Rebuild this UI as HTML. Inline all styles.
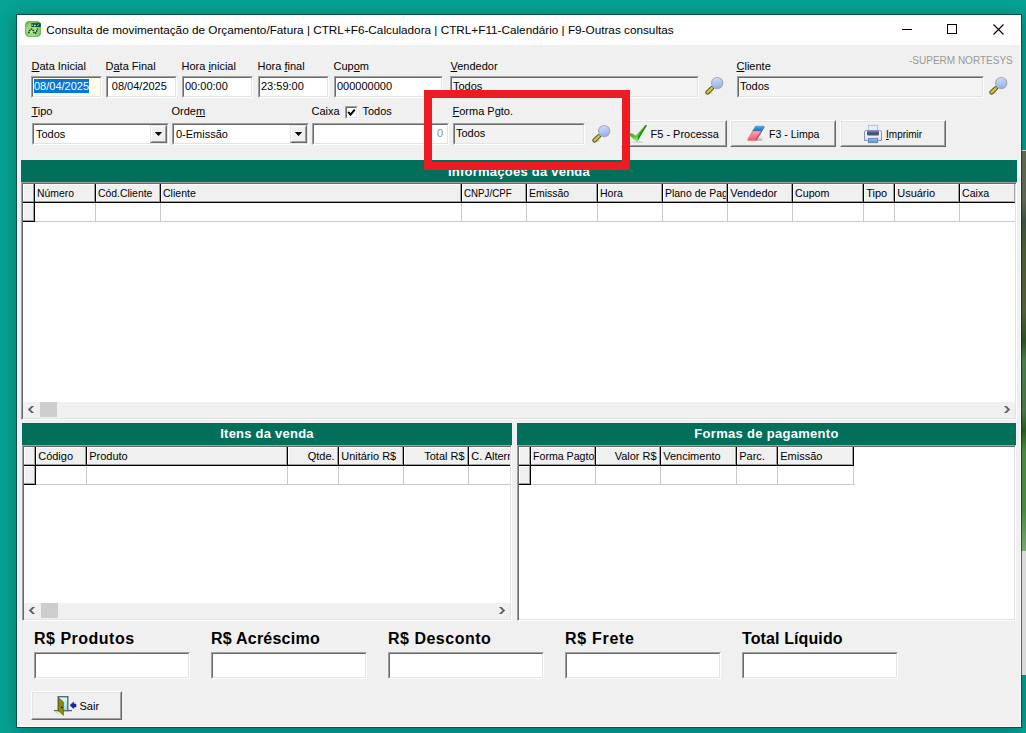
<!DOCTYPE html><html><head><meta charset="utf-8"><style>
html,body{margin:0;padding:0;width:1026px;height:733px;overflow:hidden;}
body{position:relative;background:#06a294;font-family:"Liberation Sans", sans-serif;font-size:11px;color:#000;}
u{text-decoration:underline;text-underline-offset:1px;text-decoration-thickness:1px;}
div{box-sizing:content-box;}
</style></head><body>
<div style="position:absolute;left:16px;top:14px;width:1004px;height:712px;border:1px solid transparent;box-shadow:0 3px 16px rgba(0,30,20,0.32)"></div>
<div style="position:absolute;left:1021px;top:150px;width:5px;height:1px;background:#c8d0c0"></div>
<div style="position:absolute;left:1021px;top:151px;width:5px;height:400px;background:linear-gradient(#5c6650 0px,#5a6450 50px,#3d5040 70px,#4a5a30 100px,#505e38 160px,#2c5020 190px,#4a7a48 210px,#467446 260px,#2a5a20 280px,#4a8a40 300px,#4a8a40 360px,#70a068 390px,#78a870 400px)"></div>
<div style="position:absolute;left:1021px;top:551px;width:5px;height:124px;background:#dadada"></div>
<div style="position:absolute;left:16px;top:14px;width:1004px;height:712px;border:1px solid rgba(16,24,22,0.62);background:#f0f0f0;background-clip:padding-box"></div>
<div style="position:absolute;left:17px;top:15px;width:1004px;height:30px;background:#fff"></div>
<div style="position:absolute;left:17px;top:45px;width:1px;height:682px;background:#fff"></div>
<div style="position:absolute;left:1020px;top:45px;width:1px;height:682px;background:#fff"></div>
<div style="position:absolute;left:17px;top:726px;width:1004px;height:1px;background:#fff"></div>
<svg style="position:absolute;left:25px;top:21px" width="16" height="16" viewBox="0 0 16 16"><defs><radialGradient id="ig" cx="0.45" cy="0.6" r="0.65"><stop offset="0" stop-color="#c0eca0"/><stop offset="0.7" stop-color="#90d070"/><stop offset="1" stop-color="#50a838"/></radialGradient></defs><rect x="0.4" y="0.4" width="15.2" height="15.2" rx="3.8" fill="url(#ig)" stroke="#58b040" stroke-width="0.8"/><rect x="6.3" y="2.2" width="9.4" height="3.8" fill="#0a4a30"/><path d="M7.2 3.2 L7.2 5 M9.3 4 L10.3 4 L10.3 5 L9.3 5 Z M12.5 5 L13.5 3.3" stroke="#d8f0c8" stroke-width="0.9" fill="none"/><path d="M3.6 12.4 C4.2 10 5.5 7.6 7 8 C8.4 8.4 8.6 12.6 10 12.4 C11.4 12.2 12 9 12.8 7.6" fill="none" stroke="#0a4028" stroke-width="1.5" stroke-dasharray="1.6 0.7"/></svg>
<div style="position:absolute;left:46.3px;top:21.6px;line-height:15px;white-space:nowrap;font-size:11.75px;color:#000">Consulta de movimentação de Orçamento/Fatura | CTRL+F6-Calculadora | CTRL+F11-Calendário | F9-Outras consultas</div>
<div style="position:absolute;left:902px;top:29px;width:10px;height:1px;background:#000"></div>
<div style="position:absolute;left:947px;top:24px;width:8px;height:8px;border:1px solid #000"></div>
<svg style="position:absolute;left:993px;top:24px" width="11" height="11" viewBox="0 0 11 11"><path d="M0.5 0.5 L10.5 10.5 M10.5 0.5 L0.5 10.5" stroke="#000" stroke-width="1.1"/></svg>
<div style="position:absolute;left:909px;top:54px;line-height:13px;white-space:nowrap;color:#999;font-size:10px">-SUPERM NORTESYS</div>
<div style="position:absolute;left:31.5px;top:60px;line-height:13px;white-space:nowrap;"><u>D</u>ata Inicial</div>
<div style="position:absolute;left:105.5px;top:60px;line-height:13px;white-space:nowrap;">D<u>a</u>ta Final</div>
<div style="position:absolute;left:181.5px;top:60px;line-height:13px;white-space:nowrap;">Hora <u>i</u>nicial</div>
<div style="position:absolute;left:257.5px;top:60px;line-height:13px;white-space:nowrap;">Hora <u>f</u>inal</div>
<div style="position:absolute;left:333.5px;top:60px;line-height:13px;white-space:nowrap;">Cup<u>o</u>m</div>
<div style="position:absolute;left:450.5px;top:60px;line-height:13px;white-space:nowrap;"><u>V</u>endedor</div>
<div style="position:absolute;left:736.5px;top:60px;line-height:13px;white-space:nowrap;"><u>C</u>liente</div>
<div style="position:absolute;left:31px;top:76px;width:69px;height:20px;border:1px solid;border-color:#a0a0a0 #fff #fff #a0a0a0;"><div style="position:absolute;left:0;top:0;width:67px;height:18px;border:1px solid;border-color:#696969 #e3e3e3 #e3e3e3 #696969;background:#fffde8;overflow:hidden"><div style="position:absolute;left:1px;top:1px;width:55px;height:14px;background:#0078d7"></div><div style="position:absolute;left:1px;top:2px;line-height:13px;color:#fff">08/04/2025</div></div></div>
<div style="position:absolute;left:106px;top:76px;width:69px;height:20px;border:1px solid;border-color:#a0a0a0 #fff #fff #a0a0a0;"><div style="position:absolute;left:0;top:0;width:67px;height:18px;border:1px solid;border-color:#696969 #e3e3e3 #e3e3e3 #696969;background:#fff;overflow:hidden"><div style="position:absolute;left:3.8px;top:2px;line-height:13px">08/04/2025</div></div></div>
<div style="position:absolute;left:182px;top:76px;width:69px;height:20px;border:1px solid;border-color:#a0a0a0 #fff #fff #a0a0a0;"><div style="position:absolute;left:0;top:0;width:67px;height:18px;border:1px solid;border-color:#696969 #e3e3e3 #e3e3e3 #696969;background:#fff;overflow:hidden"><div style="position:absolute;left:1px;top:2px;line-height:13px">00:00:00</div></div></div>
<div style="position:absolute;left:258px;top:76px;width:69px;height:20px;border:1px solid;border-color:#a0a0a0 #fff #fff #a0a0a0;"><div style="position:absolute;left:0;top:0;width:67px;height:18px;border:1px solid;border-color:#696969 #e3e3e3 #e3e3e3 #696969;background:#fff;overflow:hidden"><div style="position:absolute;left:1px;top:2px;line-height:13px">23:59:00</div></div></div>
<div style="position:absolute;left:334px;top:76px;width:107px;height:20px;border:1px solid;border-color:#a0a0a0 #fff #fff #a0a0a0;"><div style="position:absolute;left:0;top:0;width:105px;height:18px;border:1px solid;border-color:#696969 #e3e3e3 #e3e3e3 #696969;background:#fff;overflow:hidden"><div style="position:absolute;left:1px;top:2px;line-height:13px">000000000</div></div></div>
<div style="position:absolute;left:450px;top:76px;width:247px;height:20px;border:1px solid;border-color:#a0a0a0 #fff #fff #a0a0a0;"><div style="position:absolute;left:0;top:0;width:245px;height:18px;border:1px solid;border-color:#696969 #e3e3e3 #e3e3e3 #696969;background:#f4f4f4;overflow:hidden"><div style="position:absolute;left:1px;top:2px;line-height:13px">Todos</div></div></div>
<div style="position:absolute;left:737px;top:76px;width:245px;height:20px;border:1px solid;border-color:#a0a0a0 #fff #fff #a0a0a0;"><div style="position:absolute;left:0;top:0;width:243px;height:18px;border:1px solid;border-color:#696969 #e3e3e3 #e3e3e3 #696969;background:#f4f4f4;overflow:hidden"><div style="position:absolute;left:1px;top:2px;line-height:13px">Todos</div></div></div>
<svg style="position:absolute;left:705px;top:75px" width="20" height="20" viewBox="0 0 20 20"><defs><linearGradient id="lg" x1="0" y1="0" x2="0.2" y2="1"><stop offset="0" stop-color="#d4e2fa"/><stop offset="1" stop-color="#94b0f0"/></linearGradient><linearGradient id="hg" x1="0" y1="0" x2="1" y2="1"><stop offset="0" stop-color="#e8e070"/><stop offset="1" stop-color="#b8a830"/></linearGradient></defs><ellipse cx="5.5" cy="18" rx="2.5" ry="0.7" fill="#c0c0c0" opacity="0.6"/><path d="M2.6 17.4 L6.8 13.3" stroke="#5a5410" stroke-width="4.4" stroke-linecap="round"/><path d="M2.6 17.4 L6.8 13.3" stroke="url(#hg)" stroke-width="2.4" stroke-linecap="round"/><circle cx="12.2" cy="8.1" r="5.6" fill="url(#lg)" stroke="#a8aab4" stroke-width="1.2"/></svg>
<svg style="position:absolute;left:989px;top:75px" width="20" height="20" viewBox="0 0 20 20"><defs><linearGradient id="lg" x1="0" y1="0" x2="0.2" y2="1"><stop offset="0" stop-color="#d4e2fa"/><stop offset="1" stop-color="#94b0f0"/></linearGradient><linearGradient id="hg" x1="0" y1="0" x2="1" y2="1"><stop offset="0" stop-color="#e8e070"/><stop offset="1" stop-color="#b8a830"/></linearGradient></defs><ellipse cx="5.5" cy="18" rx="2.5" ry="0.7" fill="#c0c0c0" opacity="0.6"/><path d="M2.6 17.4 L6.8 13.3" stroke="#5a5410" stroke-width="4.4" stroke-linecap="round"/><path d="M2.6 17.4 L6.8 13.3" stroke="url(#hg)" stroke-width="2.4" stroke-linecap="round"/><circle cx="12.2" cy="8.1" r="5.6" fill="url(#lg)" stroke="#a8aab4" stroke-width="1.2"/></svg>
<div style="position:absolute;left:31.5px;top:105px;line-height:13px;white-space:nowrap;"><u>T</u>ipo</div>
<div style="position:absolute;left:171.5px;top:105px;line-height:13px;white-space:nowrap;">Orde<u>m</u></div>
<div style="position:absolute;left:311.5px;top:105px;line-height:13px;white-space:nowrap;">Caixa</div>
<div style="position:absolute;left:362.5px;top:105px;line-height:13px;white-space:nowrap;">Todos</div>
<div style="position:absolute;left:452.5px;top:105px;line-height:13px;white-space:nowrap;"><u>F</u>orma Pgto.</div>
<div style="position:absolute;left:345px;top:106px;width:11px;height:11px;border:1px solid;border-color:#a0a0a0 #fff #fff #a0a0a0;"><div style="position:absolute;left:0;top:0;width:9px;height:9px;border:1px solid;border-color:#696969 #e3e3e3 #e3e3e3 #696969;background:#fff;overflow:hidden"></div></div>
<svg style="position:absolute;left:345px;top:106px" width="13" height="13" viewBox="0 0 13 13"><path d="M3.2 5.8 L5.5 8.6 L9.8 3.6" fill="none" stroke="#000" stroke-width="2"/></svg>
<div style="position:absolute;left:32px;top:123px;width:135px;height:20px;border:1px solid;border-color:#a0a0a0 #fff #fff #a0a0a0;"><div style="position:absolute;left:0;top:0;width:133px;height:18px;border:1px solid;border-color:#696969 #e3e3e3 #e3e3e3 #696969;background:#fff;overflow:hidden"><div style="position:absolute;left:2px;top:3px;line-height:13px">Todos</div></div></div>
<div style="position:absolute;left:150px;top:125px;width:15px;height:16px;border:1px solid;border-color:#e3e3e3 #696969 #696969 #e3e3e3;"><div style="position:absolute;left:0;top:0;width:13px;height:14px;border:1px solid;border-color:#fff #a0a0a0 #a0a0a0 #fff;background:#f0f0f0;overflow:hidden"><svg style="position:absolute;left:0;top:0" width="13" height="14"><polygon points="2.8,5 10.2,5 6.5,9" fill="#000"/></svg></div></div>
<div style="position:absolute;left:172px;top:123px;width:135px;height:20px;border:1px solid;border-color:#a0a0a0 #fff #fff #a0a0a0;"><div style="position:absolute;left:0;top:0;width:133px;height:18px;border:1px solid;border-color:#696969 #e3e3e3 #e3e3e3 #696969;background:#fff;overflow:hidden"><div style="position:absolute;left:2px;top:3px;line-height:13px">0-Emissão</div></div></div>
<div style="position:absolute;left:290px;top:125px;width:15px;height:16px;border:1px solid;border-color:#e3e3e3 #696969 #696969 #e3e3e3;"><div style="position:absolute;left:0;top:0;width:13px;height:14px;border:1px solid;border-color:#fff #a0a0a0 #a0a0a0 #fff;background:#f0f0f0;overflow:hidden"><svg style="position:absolute;left:0;top:0" width="13" height="14"><polygon points="2.8,5 10.2,5 6.5,9" fill="#000"/></svg></div></div>
<div style="position:absolute;left:312px;top:123px;width:135px;height:20px;border:1px solid;border-color:#a0a0a0 #fff #fff #a0a0a0;"><div style="position:absolute;left:0;top:0;width:133px;height:18px;border:1px solid;border-color:#696969 #e3e3e3 #e3e3e3 #696969;background:#fff;overflow:hidden"><div style="position:absolute;right:4px;top:2px;line-height:13px;color:#8a8a9a">0</div></div></div>
<div style="position:absolute;left:453px;top:123px;width:130px;height:20px;border:1px solid;border-color:#a0a0a0 #fff #fff #a0a0a0;"><div style="position:absolute;left:0;top:0;width:128px;height:18px;border:1px solid;border-color:#696969 #e3e3e3 #e3e3e3 #696969;background:#f2f2f2;overflow:hidden"><div style="position:absolute;left:1px;top:2px;line-height:13px">Todos</div></div></div>
<svg style="position:absolute;left:592px;top:123px" width="20" height="20" viewBox="0 0 20 20"><defs><linearGradient id="lg" x1="0" y1="0" x2="0.2" y2="1"><stop offset="0" stop-color="#d4e2fa"/><stop offset="1" stop-color="#94b0f0"/></linearGradient><linearGradient id="hg" x1="0" y1="0" x2="1" y2="1"><stop offset="0" stop-color="#e8e070"/><stop offset="1" stop-color="#b8a830"/></linearGradient></defs><ellipse cx="5.5" cy="18" rx="2.5" ry="0.7" fill="#c0c0c0" opacity="0.6"/><path d="M2.6 17.4 L6.8 13.3" stroke="#5a5410" stroke-width="4.4" stroke-linecap="round"/><path d="M2.6 17.4 L6.8 13.3" stroke="url(#hg)" stroke-width="2.4" stroke-linecap="round"/><circle cx="12.2" cy="8.1" r="5.6" fill="url(#lg)" stroke="#a8aab4" stroke-width="1.2"/></svg>
<div style="position:absolute;left:621px;top:120px;width:104px;height:25px;border:1px solid;border-color:#fff #696969 #696969 #fff;"><div style="position:absolute;left:0;top:0;width:102px;height:23px;border:1px solid;border-color:#e3e3e3 #a0a0a0 #a0a0a0 #e3e3e3;background:#f0f0f0;overflow:hidden"><div style="position:absolute;left:27.5px;top:6px;line-height:13px">F5 - Processa</div></div></div>
<div style="position:absolute;left:730px;top:120px;width:104px;height:25px;border:1px solid;border-color:#fff #696969 #696969 #fff;"><div style="position:absolute;left:0;top:0;width:102px;height:23px;border:1px solid;border-color:#e3e3e3 #a0a0a0 #a0a0a0 #e3e3e3;background:#f0f0f0;overflow:hidden"><div style="position:absolute;left:36.5px;top:6px;line-height:13px;transform:scaleX(0.96);transform-origin:0 0">F3 - Limpa</div></div></div>
<div style="position:absolute;left:840px;top:120px;width:104px;height:25px;border:1px solid;border-color:#fff #696969 #696969 #fff;"><div style="position:absolute;left:0;top:0;width:102px;height:23px;border:1px solid;border-color:#e3e3e3 #a0a0a0 #a0a0a0 #e3e3e3;background:#f0f0f0;overflow:hidden"><div style="position:absolute;left:44px;top:6px;line-height:13px;transform:scaleX(0.91);transform-origin:0 0"><u>I</u>mprimir</div></div></div>
<svg style="position:absolute;left:626px;top:120px" width="24" height="26" viewBox="0 0 24 26"><defs><linearGradient id="ckg" x1="0" y1="0" x2="0.3" y2="1"><stop offset="0" stop-color="#1e9a0a"/><stop offset="0.7" stop-color="#4cc030"/><stop offset="1" stop-color="#a8f080"/></linearGradient></defs><ellipse cx="12" cy="22" rx="5" ry="0.9" fill="#c8c8d0" opacity="0.7"/><path d="M3.5 13 Q7 13.3 9.8 15.8 L19.2 5.6 Q20.2 4.8 20.9 5.2 L11.3 21.4 L10.2 21.4 L3.5 15.6 Z" fill="url(#ckg)"/><path d="M19.2 5.6 Q20.2 4.8 20.9 5.2 L11.3 21.4 L12 17 Z" fill="#1c9008"/></svg>
<svg style="position:absolute;left:742px;top:120px" width="26" height="26" viewBox="0 0 26 26"><defs><linearGradient id="erp" x1="0" y1="0" x2="0" y2="1"><stop offset="0" stop-color="#f8a8b0"/><stop offset="1" stop-color="#f05868"/></linearGradient><linearGradient id="erb" x1="0" y1="0" x2="0" y2="1"><stop offset="0" stop-color="#50a8f0"/><stop offset="1" stop-color="#0a70c8"/></linearGradient></defs><ellipse cx="17" cy="19.5" rx="3.5" ry="1.6" fill="#a0a0a0" opacity="0.6"/><path d="M13.6 6.2 L21.6 6.2 Q22.6 6.4 22.2 7.4 L18.9 11 L10.6 11 Z" fill="url(#erb)" stroke="#1a78d0" stroke-width="0.5" stroke-linejoin="round"/><path d="M22.2 7.4 L18.9 11 L14.8 19.6 L18.2 14.5 Z" fill="#0a5aa8"/><path d="M10.6 11 L18.9 11 L14.8 19.8 Q14.4 20.6 13.4 20.6 L6.6 20.6 Q5.2 20.4 5.8 19.2 Z" fill="url(#erp)" stroke="#e06070" stroke-width="0.5" stroke-linejoin="round"/><path d="M18.9 11 L14.8 19.8 Q14.4 20.6 13.4 20.6 L14 19 Z" fill="#d02838"/></svg>
<svg style="position:absolute;left:860px;top:120px" width="26" height="26" viewBox="0 0 26 26"><defs><linearGradient id="prb" x1="0" y1="0" x2="0" y2="1"><stop offset="0" stop-color="#ffffff"/><stop offset="1" stop-color="#d8e0f0"/></linearGradient><linearGradient id="prt" x1="0" y1="0" x2="0" y2="1"><stop offset="0" stop-color="#8ccaf8"/><stop offset="1" stop-color="#3a98e0"/></linearGradient></defs><rect x="8.3" y="5.3" width="9.4" height="7" fill="#e8ecf6" stroke="#a8b4d0" stroke-width="0.8"/><path d="M4.5 12 Q4.5 10.5 6.5 10.5 L19.5 10.5 Q21.5 10.5 21.5 12 L21.5 20.5 L4.5 20.5 Z" fill="url(#prb)" stroke="#7888b0" stroke-width="0.9"/><path d="M7 11 L19 11 L19 14 Q19 15.5 17.5 15.5 L8.5 15.5 Q7 15.5 7 14 Z" fill="#44547a"/><rect x="7" y="11" width="12" height="1.3" fill="#6a7aa0"/><rect x="8.4" y="18.4" width="9.2" height="4.3" fill="url(#prt)" stroke="#6878a8" stroke-width="0.8"/></svg>
<div style="position:absolute;left:21px;top:182px;width:994px;height:236px;border:1px solid;border-color:#a0a0a0 #fff #fff #a0a0a0;background:#fff;box-shadow:inset 1px 1px 0 #696969, inset -1px -1px 0 #e3e3e3"></div>
<div style="position:absolute;left:21px;top:160px;width:996px;height:22px;background:#016f5a"></div>
<div style="position:absolute;left:21px;top:164px;line-height:15px;white-space:nowrap;width:996px;text-align:center;color:#fff;font-weight:bold;font-size:13px;letter-spacing:0.24px">Informações da venda</div>
<div style="position:absolute;left:0;top:0;width:1015px;height:733px;overflow:hidden">
<div style="position:absolute;left:23px;top:184px;width:12px;height:19px;background:#000"><div style="position:absolute;left:0;top:0;width:11px;height:18px;background:#a0a0a0"><div style="position:absolute;left:0;top:0;width:10px;height:17px;background:#fff"><div style="position:absolute;left:1px;top:1px;width:9px;height:16px;background:#f0f0f0"></div></div></div></div>
<div style="position:absolute;left:23px;top:203px;width:12px;height:19px;background:#000"><div style="position:absolute;left:0;top:0;width:11px;height:18px;background:#a0a0a0"><div style="position:absolute;left:0;top:0;width:10px;height:17px;background:#fff"><div style="position:absolute;left:1px;top:1px;width:9px;height:16px;background:#f0f0f0"></div></div></div></div>
<div style="position:absolute;left:35px;top:184px;width:61px;height:19px;background:#000"><div style="position:absolute;left:0;top:0;width:60px;height:18px;background:#a0a0a0"><div style="position:absolute;left:0;top:0;width:59px;height:17px;background:#fff"><div style="position:absolute;left:1px;top:1px;width:58px;height:16px;background:#f0f0f0"></div></div></div><div style="position:absolute;left:0;top:0;width:59px;height:18px;overflow:hidden"><div style="position:absolute;left:2.2px;top:3px;line-height:13px;white-space:nowrap;transform:scaleX(0.947);transform-origin:0 0">Número</div></div></div>
<div style="position:absolute;left:95px;top:203px;width:1px;height:18px;background:#c8c8c8"></div>
<div style="position:absolute;left:96px;top:184px;width:65px;height:19px;background:#000"><div style="position:absolute;left:0;top:0;width:64px;height:18px;background:#a0a0a0"><div style="position:absolute;left:0;top:0;width:63px;height:17px;background:#fff"><div style="position:absolute;left:1px;top:1px;width:62px;height:16px;background:#f0f0f0"></div></div></div><div style="position:absolute;left:0;top:0;width:63px;height:18px;overflow:hidden"><div style="position:absolute;left:2.2px;top:3px;line-height:13px;white-space:nowrap;transform:scaleX(0.946);transform-origin:0 0">Cód.Cliente</div></div></div>
<div style="position:absolute;left:160px;top:203px;width:1px;height:18px;background:#c8c8c8"></div>
<div style="position:absolute;left:161px;top:184px;width:301px;height:19px;background:#000"><div style="position:absolute;left:0;top:0;width:300px;height:18px;background:#a0a0a0"><div style="position:absolute;left:0;top:0;width:299px;height:17px;background:#fff"><div style="position:absolute;left:1px;top:1px;width:298px;height:16px;background:#f0f0f0"></div></div></div><div style="position:absolute;left:0;top:0;width:299px;height:18px;overflow:hidden"><div style="position:absolute;left:2.2px;top:3px;line-height:13px;white-space:nowrap;transform:scaleX(0.957);transform-origin:0 0">Cliente</div></div></div>
<div style="position:absolute;left:461px;top:203px;width:1px;height:18px;background:#c8c8c8"></div>
<div style="position:absolute;left:462px;top:184px;width:65px;height:19px;background:#000"><div style="position:absolute;left:0;top:0;width:64px;height:18px;background:#a0a0a0"><div style="position:absolute;left:0;top:0;width:63px;height:17px;background:#fff"><div style="position:absolute;left:1px;top:1px;width:62px;height:16px;background:#f0f0f0"></div></div></div><div style="position:absolute;left:0;top:0;width:63px;height:18px;overflow:hidden"><div style="position:absolute;left:2.2px;top:3px;line-height:13px;white-space:nowrap;transform:scaleX(0.885);transform-origin:0 0">CNPJ/CPF</div></div></div>
<div style="position:absolute;left:526px;top:203px;width:1px;height:18px;background:#c8c8c8"></div>
<div style="position:absolute;left:527px;top:184px;width:71px;height:19px;background:#000"><div style="position:absolute;left:0;top:0;width:70px;height:18px;background:#a0a0a0"><div style="position:absolute;left:0;top:0;width:69px;height:17px;background:#fff"><div style="position:absolute;left:1px;top:1px;width:68px;height:16px;background:#f0f0f0"></div></div></div><div style="position:absolute;left:0;top:0;width:69px;height:18px;overflow:hidden"><div style="position:absolute;left:2.2px;top:3px;line-height:13px;white-space:nowrap;transform:scaleX(0.951);transform-origin:0 0">Emissão</div></div></div>
<div style="position:absolute;left:597px;top:203px;width:1px;height:18px;background:#c8c8c8"></div>
<div style="position:absolute;left:598px;top:184px;width:65px;height:19px;background:#000"><div style="position:absolute;left:0;top:0;width:64px;height:18px;background:#a0a0a0"><div style="position:absolute;left:0;top:0;width:63px;height:17px;background:#fff"><div style="position:absolute;left:1px;top:1px;width:62px;height:16px;background:#f0f0f0"></div></div></div><div style="position:absolute;left:0;top:0;width:63px;height:18px;overflow:hidden"><div style="position:absolute;left:2.2px;top:3px;line-height:13px;white-space:nowrap;transform:scaleX(0.957);transform-origin:0 0">Hora</div></div></div>
<div style="position:absolute;left:662px;top:203px;width:1px;height:18px;background:#c8c8c8"></div>
<div style="position:absolute;left:663px;top:184px;width:65px;height:19px;background:#000"><div style="position:absolute;left:0;top:0;width:64px;height:18px;background:#a0a0a0"><div style="position:absolute;left:0;top:0;width:63px;height:17px;background:#fff"><div style="position:absolute;left:1px;top:1px;width:62px;height:16px;background:#f0f0f0"></div></div></div><div style="position:absolute;left:0;top:0;width:63px;height:18px;overflow:hidden"><div style="position:absolute;left:2.2px;top:3px;line-height:13px;white-space:nowrap;transform:scaleX(0.95);transform-origin:0 0">Plano de Pagamento</div></div></div>
<div style="position:absolute;left:727px;top:203px;width:1px;height:18px;background:#c8c8c8"></div>
<div style="position:absolute;left:728px;top:184px;width:65px;height:19px;background:#000"><div style="position:absolute;left:0;top:0;width:64px;height:18px;background:#a0a0a0"><div style="position:absolute;left:0;top:0;width:63px;height:17px;background:#fff"><div style="position:absolute;left:1px;top:1px;width:62px;height:16px;background:#f0f0f0"></div></div></div><div style="position:absolute;left:0;top:0;width:63px;height:18px;overflow:hidden"><div style="position:absolute;left:2.2px;top:3px;line-height:13px;white-space:nowrap">Vendedor</div></div></div>
<div style="position:absolute;left:792px;top:203px;width:1px;height:18px;background:#c8c8c8"></div>
<div style="position:absolute;left:793px;top:184px;width:71px;height:19px;background:#000"><div style="position:absolute;left:0;top:0;width:70px;height:18px;background:#a0a0a0"><div style="position:absolute;left:0;top:0;width:69px;height:17px;background:#fff"><div style="position:absolute;left:1px;top:1px;width:68px;height:16px;background:#f0f0f0"></div></div></div><div style="position:absolute;left:0;top:0;width:69px;height:18px;overflow:hidden"><div style="position:absolute;left:2.2px;top:3px;line-height:13px;white-space:nowrap;transform:scaleX(0.97);transform-origin:0 0">Cupom</div></div></div>
<div style="position:absolute;left:863px;top:203px;width:1px;height:18px;background:#c8c8c8"></div>
<div style="position:absolute;left:864px;top:184px;width:31px;height:19px;background:#000"><div style="position:absolute;left:0;top:0;width:30px;height:18px;background:#a0a0a0"><div style="position:absolute;left:0;top:0;width:29px;height:17px;background:#fff"><div style="position:absolute;left:1px;top:1px;width:28px;height:16px;background:#f0f0f0"></div></div></div><div style="position:absolute;left:0;top:0;width:29px;height:18px;overflow:hidden"><div style="position:absolute;left:2.2px;top:3px;line-height:13px;white-space:nowrap">Tipo</div></div></div>
<div style="position:absolute;left:894px;top:203px;width:1px;height:18px;background:#c8c8c8"></div>
<div style="position:absolute;left:895px;top:184px;width:65px;height:19px;background:#000"><div style="position:absolute;left:0;top:0;width:64px;height:18px;background:#a0a0a0"><div style="position:absolute;left:0;top:0;width:63px;height:17px;background:#fff"><div style="position:absolute;left:1px;top:1px;width:62px;height:16px;background:#f0f0f0"></div></div></div><div style="position:absolute;left:0;top:0;width:63px;height:18px;overflow:hidden"><div style="position:absolute;left:2.2px;top:3px;line-height:13px;white-space:nowrap">Usuário</div></div></div>
<div style="position:absolute;left:959px;top:203px;width:1px;height:18px;background:#c8c8c8"></div>
<div style="position:absolute;left:960px;top:184px;width:56px;height:19px;background:#000"><div style="position:absolute;left:0;top:0;width:55px;height:18px;background:#a0a0a0"><div style="position:absolute;left:0;top:0;width:54px;height:17px;background:#fff"><div style="position:absolute;left:1px;top:1px;width:53px;height:16px;background:#f0f0f0"></div></div></div><div style="position:absolute;left:0;top:0;width:54px;height:18px;overflow:hidden"><div style="position:absolute;left:2.2px;top:3px;line-height:13px;white-space:nowrap;transform:scaleX(0.963);transform-origin:0 0">Caixa</div></div></div>
<div style="position:absolute;left:1015px;top:203px;width:1px;height:18px;background:#c8c8c8"></div>
<div style="position:absolute;left:35px;top:221px;width:982px;height:1px;background:#c8c8c8"></div>
</div>
<div style="position:absolute;left:23px;top:402px;width:992px;height:16px;background:#f0f0f0"></div>
<div style="position:absolute;left:40px;top:402px;width:17px;height:15px;background:#cdcdcd"></div>
<svg style="position:absolute;left:0;top:0;overflow:visible" width="1" height="1"><polygon points="31.40,405.90 34.10,405.90 30.50,409.50 34.10,413.10 31.40,413.10 27.80,409.50" fill="#606060"/></svg>
<svg style="position:absolute;left:0;top:0;overflow:visible" width="1" height="1"><polygon points="1006.60,405.90 1003.90,405.90 1007.50,409.50 1003.90,413.10 1006.60,413.10 1010.20,409.50" fill="#606060"/></svg>
<div style="position:absolute;left:22px;top:445px;width:488px;height:174px;border:1px solid;border-color:#a0a0a0 #fff #fff #a0a0a0;background:#fff;box-shadow:inset 1px 1px 0 #696969, inset -1px -1px 0 #e3e3e3"></div>
<div style="position:absolute;left:22px;top:423px;width:490px;height:22px;background:#016f5a"></div>
<div style="position:absolute;left:22px;top:426px;line-height:15px;white-space:nowrap;width:490px;text-align:center;color:#fff;font-weight:bold;font-size:13px;letter-spacing:0.23px">Itens da venda</div>
<div style="position:absolute;left:0;top:0;width:510px;height:733px;overflow:hidden">
<div style="position:absolute;left:24px;top:447px;width:12px;height:19px;background:#000"><div style="position:absolute;left:0;top:0;width:11px;height:18px;background:#a0a0a0"><div style="position:absolute;left:0;top:0;width:10px;height:17px;background:#fff"><div style="position:absolute;left:1px;top:1px;width:9px;height:16px;background:#f0f0f0"></div></div></div></div>
<div style="position:absolute;left:24px;top:466px;width:12px;height:19px;background:#000"><div style="position:absolute;left:0;top:0;width:11px;height:18px;background:#a0a0a0"><div style="position:absolute;left:0;top:0;width:10px;height:17px;background:#fff"><div style="position:absolute;left:1px;top:1px;width:9px;height:16px;background:#f0f0f0"></div></div></div></div>
<div style="position:absolute;left:36px;top:447px;width:51px;height:19px;background:#000"><div style="position:absolute;left:0;top:0;width:50px;height:18px;background:#a0a0a0"><div style="position:absolute;left:0;top:0;width:49px;height:17px;background:#fff"><div style="position:absolute;left:1px;top:1px;width:48px;height:16px;background:#f0f0f0"></div></div></div><div style="position:absolute;left:0;top:0;width:49px;height:18px;overflow:hidden"><div style="position:absolute;left:2.2px;top:3px;line-height:13px;white-space:nowrap">Código</div></div></div>
<div style="position:absolute;left:86px;top:466px;width:1px;height:18px;background:#c8c8c8"></div>
<div style="position:absolute;left:87px;top:447px;width:201px;height:19px;background:#000"><div style="position:absolute;left:0;top:0;width:200px;height:18px;background:#a0a0a0"><div style="position:absolute;left:0;top:0;width:199px;height:17px;background:#fff"><div style="position:absolute;left:1px;top:1px;width:198px;height:16px;background:#f0f0f0"></div></div></div><div style="position:absolute;left:0;top:0;width:199px;height:18px;overflow:hidden"><div style="position:absolute;left:2.2px;top:3px;line-height:13px;white-space:nowrap">Produto</div></div></div>
<div style="position:absolute;left:287px;top:466px;width:1px;height:18px;background:#c8c8c8"></div>
<div style="position:absolute;left:288px;top:447px;width:51px;height:19px;background:#000"><div style="position:absolute;left:0;top:0;width:50px;height:18px;background:#a0a0a0"><div style="position:absolute;left:0;top:0;width:49px;height:17px;background:#fff"><div style="position:absolute;left:1px;top:1px;width:48px;height:16px;background:#f0f0f0"></div></div></div><div style="position:absolute;left:0;top:0;width:49px;height:18px;overflow:hidden"><div style="position:absolute;right:2.4px;top:3px;line-height:13px;white-space:nowrap">Qtde.</div></div></div>
<div style="position:absolute;left:338px;top:466px;width:1px;height:18px;background:#c8c8c8"></div>
<div style="position:absolute;left:339px;top:447px;width:65px;height:19px;background:#000"><div style="position:absolute;left:0;top:0;width:64px;height:18px;background:#a0a0a0"><div style="position:absolute;left:0;top:0;width:63px;height:17px;background:#fff"><div style="position:absolute;left:1px;top:1px;width:62px;height:16px;background:#f0f0f0"></div></div></div><div style="position:absolute;left:0;top:0;width:63px;height:18px;overflow:hidden"><div style="position:absolute;left:2.2px;top:3px;line-height:13px;white-space:nowrap">Unitário R$</div></div></div>
<div style="position:absolute;left:403px;top:466px;width:1px;height:18px;background:#c8c8c8"></div>
<div style="position:absolute;left:404px;top:447px;width:65px;height:19px;background:#000"><div style="position:absolute;left:0;top:0;width:64px;height:18px;background:#a0a0a0"><div style="position:absolute;left:0;top:0;width:63px;height:17px;background:#fff"><div style="position:absolute;left:1px;top:1px;width:62px;height:16px;background:#f0f0f0"></div></div></div><div style="position:absolute;left:0;top:0;width:63px;height:18px;overflow:hidden"><div style="position:absolute;right:2.4px;top:3px;line-height:13px;white-space:nowrap">Total R$</div></div></div>
<div style="position:absolute;left:468px;top:466px;width:1px;height:18px;background:#c8c8c8"></div>
<div style="position:absolute;left:469px;top:447px;width:92px;height:19px;background:#000"><div style="position:absolute;left:0;top:0;width:91px;height:18px;background:#a0a0a0"><div style="position:absolute;left:0;top:0;width:90px;height:17px;background:#fff"><div style="position:absolute;left:1px;top:1px;width:89px;height:16px;background:#f0f0f0"></div></div></div><div style="position:absolute;left:0;top:0;width:90px;height:18px;overflow:hidden"><div style="position:absolute;left:2.2px;top:3px;line-height:13px;white-space:nowrap">C. Alternativo</div></div></div>
<div style="position:absolute;left:560px;top:466px;width:1px;height:18px;background:#c8c8c8"></div>
<div style="position:absolute;left:36px;top:484px;width:526px;height:1px;background:#c8c8c8"></div>
</div>
<div style="position:absolute;left:24px;top:603px;width:486px;height:16px;background:#f0f0f0"></div>
<div style="position:absolute;left:41px;top:603px;width:17px;height:15px;background:#cdcdcd"></div>
<svg style="position:absolute;left:0;top:0;overflow:visible" width="1" height="1"><polygon points="32.40,606.90 35.10,606.90 31.50,610.50 35.10,614.10 32.40,614.10 28.80,610.50" fill="#606060"/></svg>
<svg style="position:absolute;left:0;top:0;overflow:visible" width="1" height="1"><polygon points="501.60,606.90 498.90,606.90 502.50,610.50 498.90,614.10 501.60,614.10 505.20,610.50" fill="#606060"/></svg>
<div style="position:absolute;left:517px;top:445px;width:497px;height:174px;border:1px solid;border-color:#a0a0a0 #fff #fff #a0a0a0;background:#fff;box-shadow:inset 1px 1px 0 #696969, inset -1px -1px 0 #e3e3e3"></div>
<div style="position:absolute;left:517px;top:423px;width:499px;height:22px;background:#016f5a"></div>
<div style="position:absolute;left:517px;top:426px;line-height:15px;white-space:nowrap;width:499px;text-align:center;color:#fff;font-weight:bold;font-size:13px;letter-spacing:0.3px">Formas de pagamento</div>
<div style="position:absolute;left:0;top:0;width:1014px;height:733px;overflow:hidden">
<div style="position:absolute;left:519px;top:447px;width:12px;height:19px;background:#000"><div style="position:absolute;left:0;top:0;width:11px;height:18px;background:#a0a0a0"><div style="position:absolute;left:0;top:0;width:10px;height:17px;background:#fff"><div style="position:absolute;left:1px;top:1px;width:9px;height:16px;background:#f0f0f0"></div></div></div></div>
<div style="position:absolute;left:519px;top:466px;width:12px;height:19px;background:#000"><div style="position:absolute;left:0;top:0;width:11px;height:18px;background:#a0a0a0"><div style="position:absolute;left:0;top:0;width:10px;height:17px;background:#fff"><div style="position:absolute;left:1px;top:1px;width:9px;height:16px;background:#f0f0f0"></div></div></div></div>
<div style="position:absolute;left:531px;top:447px;width:65px;height:19px;background:#000"><div style="position:absolute;left:0;top:0;width:64px;height:18px;background:#a0a0a0"><div style="position:absolute;left:0;top:0;width:63px;height:17px;background:#fff"><div style="position:absolute;left:1px;top:1px;width:62px;height:16px;background:#f0f0f0"></div></div></div><div style="position:absolute;left:0;top:0;width:63px;height:18px;overflow:hidden"><div style="position:absolute;left:2.2px;top:3px;line-height:13px;white-space:nowrap;transform:scaleX(0.965);transform-origin:0 0">Forma Pagto</div></div></div>
<div style="position:absolute;left:595px;top:466px;width:1px;height:18px;background:#c8c8c8"></div>
<div style="position:absolute;left:596px;top:447px;width:65px;height:19px;background:#000"><div style="position:absolute;left:0;top:0;width:64px;height:18px;background:#a0a0a0"><div style="position:absolute;left:0;top:0;width:63px;height:17px;background:#fff"><div style="position:absolute;left:1px;top:1px;width:62px;height:16px;background:#f0f0f0"></div></div></div><div style="position:absolute;left:0;top:0;width:63px;height:18px;overflow:hidden"><div style="position:absolute;right:2.4px;top:3px;line-height:13px;white-space:nowrap">Valor R$</div></div></div>
<div style="position:absolute;left:660px;top:466px;width:1px;height:18px;background:#c8c8c8"></div>
<div style="position:absolute;left:661px;top:447px;width:76px;height:19px;background:#000"><div style="position:absolute;left:0;top:0;width:75px;height:18px;background:#a0a0a0"><div style="position:absolute;left:0;top:0;width:74px;height:17px;background:#fff"><div style="position:absolute;left:1px;top:1px;width:73px;height:16px;background:#f0f0f0"></div></div></div><div style="position:absolute;left:0;top:0;width:74px;height:18px;overflow:hidden"><div style="position:absolute;left:2.2px;top:3px;line-height:13px;white-space:nowrap">Vencimento</div></div></div>
<div style="position:absolute;left:736px;top:466px;width:1px;height:18px;background:#c8c8c8"></div>
<div style="position:absolute;left:737px;top:447px;width:41px;height:19px;background:#000"><div style="position:absolute;left:0;top:0;width:40px;height:18px;background:#a0a0a0"><div style="position:absolute;left:0;top:0;width:39px;height:17px;background:#fff"><div style="position:absolute;left:1px;top:1px;width:38px;height:16px;background:#f0f0f0"></div></div></div><div style="position:absolute;left:0;top:0;width:39px;height:18px;overflow:hidden"><div style="position:absolute;left:2.2px;top:3px;line-height:13px;white-space:nowrap">Parc.</div></div></div>
<div style="position:absolute;left:777px;top:466px;width:1px;height:18px;background:#c8c8c8"></div>
<div style="position:absolute;left:778px;top:447px;width:76px;height:19px;background:#000"><div style="position:absolute;left:0;top:0;width:75px;height:18px;background:#a0a0a0"><div style="position:absolute;left:0;top:0;width:74px;height:17px;background:#fff"><div style="position:absolute;left:1px;top:1px;width:73px;height:16px;background:#f0f0f0"></div></div></div><div style="position:absolute;left:0;top:0;width:74px;height:18px;overflow:hidden"><div style="position:absolute;left:2.2px;top:3px;line-height:13px;white-space:nowrap">Emissão</div></div></div>
<div style="position:absolute;left:853px;top:466px;width:1px;height:18px;background:#c8c8c8"></div>
<div style="position:absolute;left:531px;top:484px;width:324px;height:1px;background:#c8c8c8"></div>
</div>
<div style="position:absolute;left:34px;top:630px;line-height:18px;white-space:nowrap;font-weight:bold;font-size:16px;letter-spacing:0.5px">R$ Produtos</div>
<div style="position:absolute;left:34px;top:652px;width:154px;height:25px;border:1px solid;border-color:#a0a0a0 #fff #fff #a0a0a0;"><div style="position:absolute;left:0;top:0;width:152px;height:23px;border:1px solid;border-color:#696969 #e3e3e3 #e3e3e3 #696969;background:#fff;overflow:hidden"></div></div>
<div style="position:absolute;left:211px;top:630px;line-height:18px;white-space:nowrap;font-weight:bold;font-size:16px;letter-spacing:0.23px">R$ Acréscimo</div>
<div style="position:absolute;left:211px;top:652px;width:154px;height:25px;border:1px solid;border-color:#a0a0a0 #fff #fff #a0a0a0;"><div style="position:absolute;left:0;top:0;width:152px;height:23px;border:1px solid;border-color:#696969 #e3e3e3 #e3e3e3 #696969;background:#fff;overflow:hidden"></div></div>
<div style="position:absolute;left:388px;top:630px;line-height:18px;white-space:nowrap;font-weight:bold;font-size:16px;letter-spacing:0.5px">R$ Desconto</div>
<div style="position:absolute;left:388px;top:652px;width:154px;height:25px;border:1px solid;border-color:#a0a0a0 #fff #fff #a0a0a0;"><div style="position:absolute;left:0;top:0;width:152px;height:23px;border:1px solid;border-color:#696969 #e3e3e3 #e3e3e3 #696969;background:#fff;overflow:hidden"></div></div>
<div style="position:absolute;left:565px;top:630px;line-height:18px;white-space:nowrap;font-weight:bold;font-size:16px;letter-spacing:0.7px">R$ Frete</div>
<div style="position:absolute;left:565px;top:652px;width:154px;height:25px;border:1px solid;border-color:#a0a0a0 #fff #fff #a0a0a0;"><div style="position:absolute;left:0;top:0;width:152px;height:23px;border:1px solid;border-color:#696969 #e3e3e3 #e3e3e3 #696969;background:#fff;overflow:hidden"></div></div>
<div style="position:absolute;left:742px;top:630px;line-height:18px;white-space:nowrap;font-weight:bold;font-size:16px;letter-spacing:0.11px">Total Líquido</div>
<div style="position:absolute;left:742px;top:652px;width:154px;height:25px;border:1px solid;border-color:#a0a0a0 #fff #fff #a0a0a0;"><div style="position:absolute;left:0;top:0;width:152px;height:23px;border:1px solid;border-color:#696969 #e3e3e3 #e3e3e3 #696969;background:#fff;overflow:hidden"></div></div>
<div style="position:absolute;left:31px;top:691px;width:89px;height:27px;border:1px solid;border-color:#fff #696969 #696969 #fff;"><div style="position:absolute;left:0;top:0;width:87px;height:25px;border:1px solid;border-color:#e3e3e3 #a0a0a0 #a0a0a0 #e3e3e3;background:#f0f0f0;overflow:hidden"><div style="position:absolute;left:46.5px;top:7px;line-height:13px">Sair</div></div></div>
<svg style="position:absolute;left:52px;top:692px" width="28" height="28" viewBox="0 0 28 28"><defs><linearGradient id="dg" x1="0" y1="0" x2="0" y2="1"><stop offset="0" stop-color="#e4f6fc"/><stop offset="1" stop-color="#90d8f4"/></linearGradient></defs><path d="M2 18.6 L6.5 18.6" stroke="#6a6a48" stroke-width="1.3"/><path d="M15.5 18.6 L20 18.6" stroke="#50606a" stroke-width="1.3"/><path d="M3 19.6 L7 22" stroke="#c8c8c8" stroke-width="1"/><rect x="6.2" y="4.7" width="9.6" height="14" fill="url(#dg)" stroke="#5a6a72" stroke-width="1.4"/><path d="M6.5 5.5 L11.5 10 L11.5 23.5 L6.5 19 Z" fill="#8a8a08" stroke="#505000" stroke-width="0.5"/><path d="M9.2 14.8 L10.6 16.2" stroke="#000" stroke-width="1.2"/><path d="M18 13.3 L21.7 10 L21.7 12 L24 12 L24 15 L21.7 15 L21.7 16.7 Z" fill="#0a2cb0" stroke="#001a80" stroke-width="0.5"/></svg>
<div style="position:absolute;left:424px;top:90px;width:190px;height:64px;border:8px solid #ed1c24"></div>
</body></html>
